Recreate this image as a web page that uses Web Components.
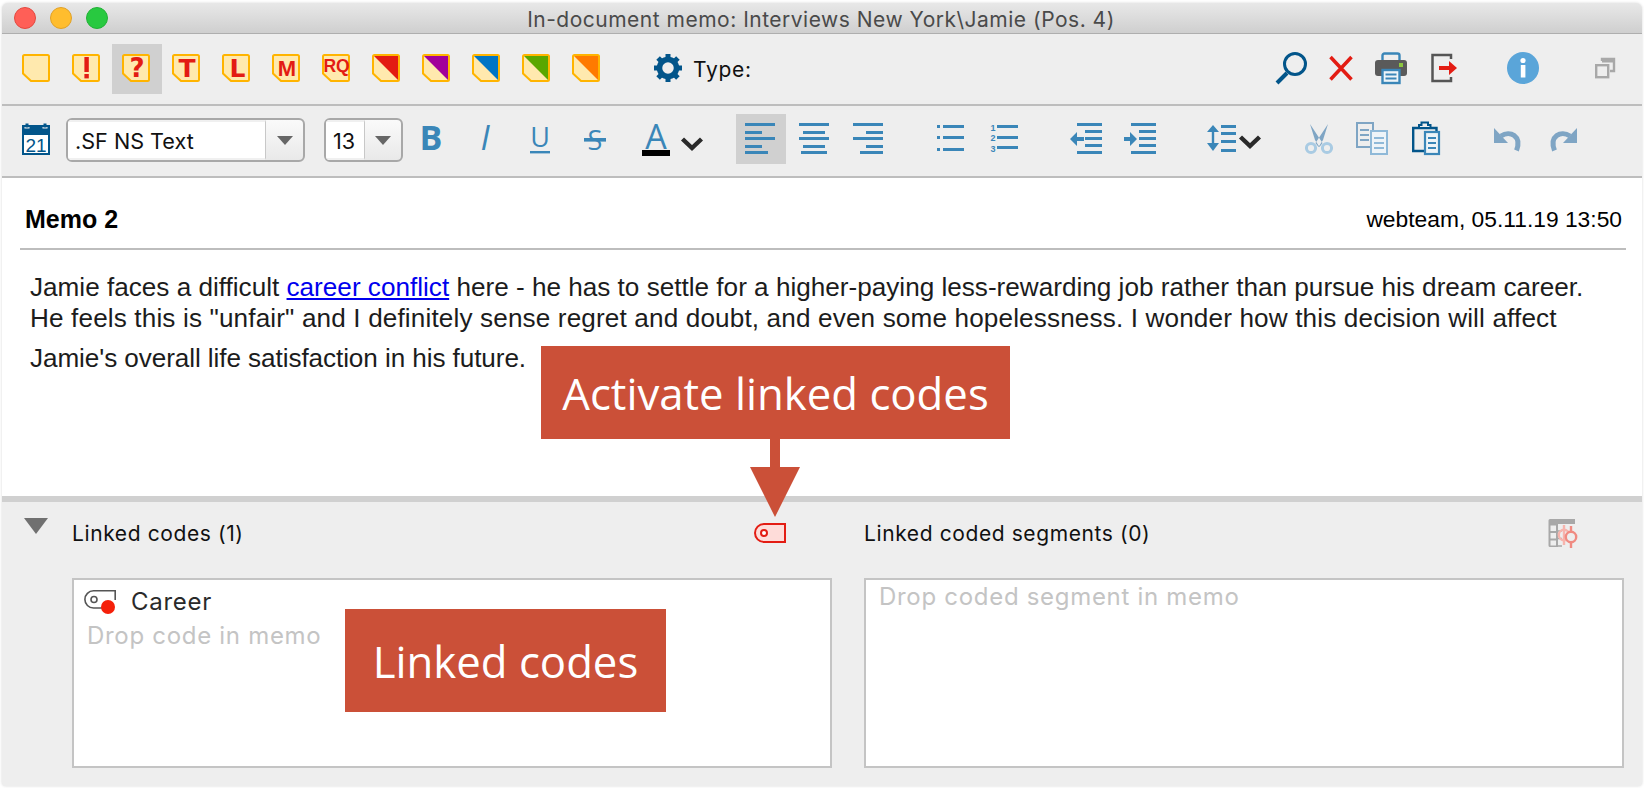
<!DOCTYPE html>
<html lang="en"><head><meta charset="utf-8"><title>In-document memo</title>
<style>
html,body{margin:0;padding:0;background:#fff;height:788px;overflow:hidden}
body{font-family:"Inter","Liberation Sans",sans-serif;}
</style></head><body>
<memo-window>
  <title-bar>In-document memo: Interviews New York\Jamie (Pos. 4)</title-bar>
  <tool-bar>
    <tool-icon name="m0" w="50" dy="2"></tool-icon><tool-icon name="m!" w="50" dy="2"></tool-icon><tool-icon name="m?" w="50" dy="2" active></tool-icon><tool-icon name="mT" w="50" dy="2"></tool-icon><tool-icon name="mL" w="50" dy="2"></tool-icon><tool-icon name="mM" w="50" dy="2"></tool-icon><tool-icon name="mRQ" w="50" dy="2"></tool-icon><tool-icon name="tr1" w="50" dy="2"></tool-icon><tool-icon name="tr2" w="50" dy="2"></tool-icon><tool-icon name="tr3" w="50" dy="2"></tool-icon><tool-icon name="tr4" w="50" dy="2"></tool-icon><tool-icon name="tr5" w="50" dy="2"></tool-icon>
    <tool-icon name="gear" w="28" ml="42"></tool-icon>
    <tool-label>Type:</tool-label>
    <tool-icon name="search" w="32" ml="auto"></tool-icon>
    <tool-icon name="close" w="24" ml="22"></tool-icon>
    <tool-icon name="print" w="32" ml="22"></tool-icon>
    <tool-icon name="exit" w="26" ml="24"></tool-icon>
    <tool-icon name="info" w="32" ml="50"></tool-icon>
    <tool-icon name="win" w="20" ml="56" mr="27"></tool-icon>
  </tool-bar>
  <tool-bar>
    <tool-icon name="cal" w="28" ml="10"></tool-icon>
    <combo-box w="239" field="198" ml="16">.SF NS Text</combo-box>
    <combo-box w="79" field="39" ml="19">13</combo-box>
    <tool-icon name="bold" w="24" ml="17"></tool-icon>
    <tool-icon name="ital" w="14" ml="34"></tool-icon>
    <tool-icon name="under" w="24" ml="36"></tool-icon>
    <tool-icon name="strike" w="24" ml="31"></tool-icon>
    <tool-icon name="color" w="28" ml="35"></tool-icon>
    <tool-icon name="chev1" w="22" ml="11"></tool-icon>
    <tool-icon name="alL" w="50" ml="33" dy="-2" active></tool-icon>
    <tool-icon name="alC" w="30" ml="13"></tool-icon>
    <tool-icon name="alR" w="30" ml="24"></tool-icon>
    <tool-icon name="bul" w="28" ml="54"></tool-icon>
    <tool-icon name="num" w="30" ml="25"></tool-icon>
    <tool-icon name="dec" w="32" ml="50"></tool-icon>
    <tool-icon name="inc" w="32" ml="22"></tool-icon>
    <tool-icon name="spc" w="30" ml="51"></tool-icon>
    <tool-icon name="chev2" w="22" ml="2"></tool-icon>
    <tool-icon name="cut" w="28" ml="44"></tool-icon>
    <tool-icon name="copy" w="32" ml="23"></tool-icon>
    <tool-icon name="paste" w="28" ml="24"></tool-icon>
    <tool-icon name="undo" w="28" ml="54"></tool-icon>
    <tool-icon name="redo" w="28" ml="27"></tool-icon>
  </tool-bar>
  <memo-body>
    <span slot="title">Memo 2</span>
    <span slot="meta">webteam, 05.11.19 13:50</span>
    <div class="l1">Jamie faces a difficult <a href="#" style="color:#0000ee;text-decoration:underline">career conflict</a> here - he has to settle for a higher-paying less-rewarding job rather than pursue his dream career.</div>
    <div class="l2">He feels this is "unfair" and I definitely sense regret and doubt, and even some hopelessness. I wonder how this decision will affect</div>
    <div class="l3">Jamie's overall life satisfaction in his future.</div>
  </memo-body>
  <linked-panel></linked-panel>
  <call-out style="left:539px;top:343px;width:469px;height:93px;font-size:43.7px">Activate linked codes</call-out>
  <arrow-down style="left:748px;top:436px"></arrow-down>
  <call-out style="left:343px;top:606px;width:321px;height:103px;font-size:43.7px">Linked codes</call-out>
</memo-window>
<script>
const B='#3a86b8',D='#02558a',M='#7fa5c4',R='#e31c13';
const memo=(inner='')=>`<g transform="translate(10 3)"><path d="M2.5 1H25.5A1.5 1.5 0 0 1 27 2.5V25.5A1.5 1.5 0 0 1 25.5 27H9L1 19.5V2.5A1.5 1.5 0 0 1 2.5 1Z" fill="#ffe9ae" stroke="#ffb400" stroke-width="2"/>${inner}</g>`;
const L=(t,x=14,y=21,s=20,f='Liberation Sans')=>`<text x="${x}" y="${y}" text-anchor="middle" font-family="${f}" font-weight="700" font-size="${s}" fill="${R}">${t}</text>`;
const tri=c=>memo(`<polygon points="2,2 26,2 26,26" fill="${c}"/>`);
const bars=(rows,c=B)=>rows.map(r=>`<rect x="${r[0]}" y="${r[1]}" width="${r[2]}" height="${r[3]||3}" fill="${c}"/>`).join('');
const T=(t,x,y,s,a='')=>`<text x="${x}" y="${y}" text-anchor="middle" font-family="Open Sans" font-size="${s}" fill="${B}" ${a}>${t}</text>`;
const chev=y=>`<polyline points="1.5,${y+2} 11,${y+11} 20.5,${y+2}" fill="none" stroke="#2a2a2a" stroke-width="4.4"/>`;
const gearTeeth=[0,45,90,135,180,225,270,315].map(a=>`<rect x="11.5" y="4" width="5" height="6" fill="${D}" transform="rotate(${a} 14 18)"/>`).join('');
const ICONS={
 m0:memo(),'m!':memo(`<rect x="12.4" y="3" width="4.4" height="15" fill="${R}"/><rect x="12.4" y="20" width="4.4" height="4.4" fill="${R}"/>`),
 'm?':memo(L('?',15,23,26,'DejaVu Sans')),mT:memo(L('T',15,23,25,'DejaVu Sans')),mL:memo(L('L',15.5,23,25,'DejaVu Sans')),
 mM:memo(L('M',15,22,22,'Liberation Sans')),mRQ:memo(L('RQ',14.5,18,17.5,'Liberation Sans')),
 tr1:tri('#e31c13'),tr2:tri('#a2009a'),tr3:tri('#0075c5'),tr4:tri('#5aa700'),tr5:tri('#ff7a00'),
 gear:`${gearTeeth}<circle cx="14" cy="18" r="8.5" fill="none" stroke="${D}" stroke-width="5.5"/>`,
 search:`<circle cx="20" cy="14" r="10.5" fill="none" stroke="${D}" stroke-width="3"/><line x1="12" y1="23" x2="2" y2="33" stroke="${D}" stroke-width="4"/>`,
 close:`<path d="M1.5 7 22.5 29.5M22.5 7 1.5 29.5" stroke="${R}" stroke-width="3.5" fill="none"/>`,
 print:`<rect x="7.5" y="3.5" width="17" height="10" rx="2" fill="#eee" stroke="${B}" stroke-width="2.4"/><rect x="0" y="10" width="32" height="16" rx="3" fill="#5a5a5a"/><rect x="24" y="13" width="4" height="4" fill="#8cc63f"/><rect x="7.5" y="20" width="17" height="13" fill="#eef4f8" stroke="${B}" stroke-width="2.4"/><path d="M10.5 24.5H21.5M10.5 28.5H21.5" stroke="${B}" stroke-width="2"/>`,
 exit:`<path d="M20 9V5H1.5V31H20V27" fill="none" stroke="#555" stroke-width="2.5"/><polygon points="8,16 18,16 18,11 26,18 18,25 18,20 8,20" fill="${R}"/>`,
 info:`<circle cx="16" cy="18" r="16" fill="#5aa5d9"/><circle cx="16" cy="10.5" r="2.6" fill="#fff"/><rect x="13.8" y="15" width="4.6" height="12.5" fill="#fff"/>`,
 win:`<path d="M7 11V9H19V21H15" fill="none" stroke="#a8a8a8" stroke-width="2.4"/><rect x="7" y="9" width="12" height="3.5" fill="#a8a8a8"/><rect x="1.2" y="15.2" width="12" height="12" fill="none" stroke="#a8a8a8" stroke-width="2.4"/>`,
 cal:`<rect x="0" y="3" width="28" height="30" fill="#fff"/><rect x="0" y="3" width="28" height="10" fill="${D}"/><rect x="3" y="1" width="4" height="5" fill="${D}" stroke="#eee"/><rect x="21" y="1" width="4" height="5" fill="${D}" stroke="#eee"/><rect x="1" y="4" width="26" height="28" fill="none" stroke="${D}" stroke-width="2"/><text x="14" y="30" text-anchor="middle" font-family="Liberation Sans" font-size="19" fill="${D}">21</text>`,
 bold:T('B',11,28,34,'font-weight="700" '),
 ital:`<text x="7" y="28" text-anchor="middle" font-family="Open Sans" font-style="italic" font-size="34" fill="${B}">I</text>`,
 under:T('U',12,25,27)+`<rect x="2" y="29" width="20" height="2.4" fill="${B}"/>`,
 strike:T('S',12,28,27)+`<rect x="1" y="16" width="22" height="3.6" fill="${B}"/>`,
 color:T('A',14,27,34)+`<rect x="0" y="28" width="28" height="6" fill="#000"/>`,
 chev1:chev(15),chev2:chev(13),
 alL:bars([[9,2,30],[9,10,17],[9,16,30],[9,24,17],[9,30,23]]),
 alC:bars([[0,1,30],[4,9,22],[0,15,30],[4,23,22],[2,29,26]]),
 alR:bars([[0,1,30],[13,9,17],[0,15,30],[13,23,17],[7,29,23]]),
 bul:bars([[0,3,3],[6,3,21],[0,14,3],[6,14,21],[0,26,3],[6,26,21]]),
 num:`<text x="3" y="9" text-anchor="middle" font-family="Liberation Sans" font-weight="700" font-size="9" fill="${B}">1</text><text x="3" y="19" text-anchor="middle" font-family="Liberation Sans" font-weight="700" font-size="9" fill="${B}">2</text><text x="3" y="30" text-anchor="middle" font-family="Liberation Sans" font-weight="700" font-size="9" fill="${B}">3</text>`+bars([[7,3,21],[7,14,21],[7,24,21]]),
 dec:bars([[7,1,25],[15,8,17],[15,15,17],[15,22,17],[7,29,25]])+`<polygon points="0,17 7,10 7,15 14,15 14,19 7,19 7,24" fill="${B}"/>`,
 inc:bars([[7,1,25],[15,8,17],[15,15,17],[15,22,17],[7,29,25]])+`<polygon points="13,17 6,10 6,15 0,15 0,19 6,19 6,24" fill="${B}"/>`,
 spc:`<path d="M6 3 12 10H7.2V21H12L6 29 0 21H4.8V10H0Z" fill="${B}"/>`+bars([[14,3,15],[14,10,15],[14,18,15],[14,27,15]]),
 cut:`<path d="M5 2 17.5 21 14.5 25 10 18ZM23 2 10.5 21 13.5 25 18 18Z" fill="${M}"/><circle cx="6" cy="26" r="4.6" fill="none" stroke="#a9cbe3" stroke-width="3"/><circle cx="22" cy="26" r="4.6" fill="none" stroke="#a9cbe3" stroke-width="3"/>`,
 copy:`<path d="M14 25H1V1H17V8" fill="none" stroke="${M}" stroke-width="2"/>`+bars([[4,7,9,2],[4,12,9,2],[4,17,9,2]],M)+`<rect x="15" y="9" width="16" height="23" fill="#eef4f8" stroke="#8fb9d8" stroke-width="2"/>`+bars([[18,15,10,2],[18,20,10,2],[18,25,10,2]],'#8fb9d8'),
 paste:`<path d="M12 29H1.2V6H24.5V10" fill="none" stroke="${D}" stroke-width="2.4"/><path d="M7 6V3H9.5V0.5H16V3H18.5V6Z" fill="#eee" stroke="${D}" stroke-width="2"/><rect x="13" y="10" width="14" height="22" fill="#eef4f8" stroke="${B}" stroke-width="2.2"/>`+bars([[16,15,8,2],[16,20,8,2],[16,25,8,2]]),
 undo:`<path d="M7 14C16 8 28 14 22.5 28.5" fill="none" stroke="${M}" stroke-width="5"/><polygon points="0,6 0,21 14,21" fill="${M}"/>`,
 redo:`<path d="M21 14C12 8 0 14 5.5 28.5" fill="none" stroke="${M}" stroke-width="5"/><polygon points="28,6 28,21 14,21" fill="${M}"/>`
};
class MemoWindow extends HTMLElement{constructor(){super();this.attachShadow({mode:'open'}).innerHTML=`<style>:host{display:flex;flex-direction:column;position:relative;box-sizing:border-box;margin:3px 2px 0 2px;width:1640px;height:783px;background:#eee;border-radius:6px 6px 4px 4px;overflow:hidden;box-shadow:0 0 3px rgba(0,0,0,.16)}</style><slot></slot>`}}
class TitleBar extends HTMLElement{constructor(){super();this.attachShadow({mode:'open'}).innerHTML=`<style>:host{display:flex;flex:none;align-items:center;justify-content:center;box-sizing:border-box;height:31px;padding:2px 2px 0 0;background:linear-gradient(#e8e8e8,#cfcfcf);border-bottom:1px solid #aeaeae;color:#4a4a4a;font:21px "Inter","Liberation Sans",sans-serif;letter-spacing:.5px;position:relative}
.l{position:absolute;left:12px;top:4px;display:flex;gap:14px}i{display:block;width:22px;height:22px;border-radius:50%;box-sizing:border-box}</style><div class="l"><i style="background:#ff5f57;border:1px solid #e3483f"></i><i style="background:#ffbd2e;border:1px solid #e0a128"></i><i style="background:#28c940;border:1px solid #22b136"></i></div><slot></slot>`}}
class ToolBar extends HTMLElement{constructor(){super();this.attachShadow({mode:'open'}).innerHTML=`<style>:host{display:flex;flex:none;align-items:center;box-sizing:border-box;height:72px;padding:0 0 2px 10px;border-bottom:2px solid #bdbdbd;background:#eee}</style><slot></slot>`}}
class ToolIcon extends HTMLElement{connectedCallback(){if(this.shadowRoot)return;const w=this.getAttribute('w'),ml=this.getAttribute('ml'),mr=this.getAttribute('mr'),dy=this.getAttribute('dy'),a=this.hasAttribute('active');const s=this.attachShadow({mode:'open'});const big=+w===50;s.innerHTML=`<style>:host{display:flex;align-items:center;flex:none;width:${w}px;height:${big?50:36}px;margin-top:${dy||0}px;margin-left:${ml==='auto'?'auto':(ml||0)+'px'};margin-right:${mr||0}px;${a?'background:#d0d0d0':''}}svg{display:block;overflow:visible}</style><svg width="${w}" height="36" viewBox="0 0 ${w} 36" aria-hidden="true">${ICONS[this.getAttribute('name')]}</svg>`}}
class ToolLabel extends HTMLElement{constructor(){super();this.attachShadow({mode:'open'}).innerHTML=`<style>:host{display:block;flex:none;margin:3px 0 0 11px;color:#111;font:21px "Inter","Liberation Sans",sans-serif;letter-spacing:.7px}</style><slot></slot>`}}
class ComboBox extends HTMLElement{connectedCallback(){if(this.shadowRoot)return;const w=this.getAttribute('w'),f=this.getAttribute('field'),ml=this.getAttribute('ml');this.attachShadow({mode:'open'}).innerHTML=`<style>:host{display:flex;flex:none;box-sizing:border-box;width:${w}px;height:44px;margin-left:${ml}px;border:2px solid #a8a8a8;border-radius:6px;overflow:hidden;background:linear-gradient(#fafafa,#e9e9e9);color:#111;font:21.6px "Inter","Liberation Sans",sans-serif}
.f{box-sizing:border-box;width:${f}px;height:100%;background:#fff;padding:1px 0 0 7px;display:flex;align-items:center;border:solid #f0f0f0;border-width:2px 0;white-space:nowrap;overflow:hidden;border-right:1px solid #c8c8c8}.a{flex:1;display:flex;align-items:center;justify-content:center}.a i{display:block;width:0;height:0;border:8px solid transparent;border-top:9px solid #666;border-bottom:0}</style><div class="f"><slot></slot></div><div class="a"><i></i></div>`}}
class MemoBody extends HTMLElement{constructor(){super();this.attachShadow({mode:'open'}).innerHTML=`<style>:host{display:block;flex:none;box-sizing:border-box;height:318px;background:#fff;padding:0 16px 0 18px;font-family:"Liberation Sans",sans-serif;color:#1c1c1c;border-bottom:0}
.h{display:flex;justify-content:space-between;align-items:center;box-sizing:border-box;height:72px;padding:12px 4px 0 5px;border-bottom:2px solid #bdbdbd;color:#000}
.h ::slotted([slot=title]){font-weight:700;font-size:25px}.h ::slotted([slot=meta]){font-size:22.8px}
.t{padding:22px 0 0 10px;font-size:26.14px;white-space:nowrap}
::slotted(.l1){line-height:31px}::slotted(.l2){line-height:31px;letter-spacing:.14px}::slotted(.l3){line-height:31px;margin-top:9px;letter-spacing:-.085px}</style><div class="h"><slot name="title"></slot><slot name="meta"></slot></div><div class="t"><slot></slot></div>`}}
class LinkedPanel extends HTMLElement{constructor(){super();this.attachShadow({mode:'open'}).innerHTML=`<style>:host{display:grid;flex:1;grid-template-columns:70px 760px 792px;grid-template-rows:76px 190px;column-gap:0;border-top:6px solid #d0d0d0;background:#eee;color:#111;font:21px "Inter","Liberation Sans",sans-serif;letter-spacing:.6px;box-sizing:border-box}
.tw{padding:16px 0 0 22px}.tw i{display:block;width:0;height:0;border:12px solid transparent;border-top:16px solid #707070;border-bottom:0}
.hd{display:flex;align-items:center;justify-content:space-between;height:60px;padding-right:46px;margin-top:1px}
.b3{margin-left:32px}
.box{box-sizing:border-box;border:2px solid #c4c4c4;background:#fff;padding:6px 10px;font-size:24px;letter-spacing:.7px;height:190px}
.ph{color:#c4c4c4;padding-left:3px}.row{display:flex;align-items:center;gap:15px;color:#2a2a2a;height:30px}
svg{display:block;flex:none}</style>
<div class="tw"><i></i></div>
<div class="hd"><span>Linked codes (1)</span><svg width="32" height="20" viewBox="0 0 32 20"><path d="M10 1H31V19H10A9 9 0 0 1 10 1Z" fill="#fedcd9" stroke="#e31c13" stroke-width="2"/><circle cx="10" cy="10" r="3" fill="#fff" stroke="#e31c13" stroke-width="2"/></svg></div>
<div class="hd b3"><span>Linked coded segments (0)</span><svg width="30" height="30" viewBox="0 0 30 30"><path d="M2 1H27V6H10V29H2A1.5 1.5 0 0 1 .5 27.5V2.5A1.5 1.5 0 0 1 2 1Z" fill="#a8a8a8"/><rect x="2.5" y="7.5" width="5.5" height="5.5" fill="#eee"/><rect x="2.5" y="15" width="5.5" height="5.5" fill="#eee"/><rect x="2.5" y="22.5" width="5.5" height="5" fill="#eee"/><path d="M10 13H14M10 20.5H14M10 28H14" stroke="#a8a8a8" stroke-width="1.6"/><path d="M16 7V27" stroke="#f7b4ad" stroke-width="2.4"/><circle cx="16" cy="17" r="5.2" fill="none" stroke="#f7b4ad" stroke-width="2.4"/><path d="M23 8V30" stroke="#f08b82" stroke-width="2.4"/><circle cx="23" cy="19" r="5.2" fill="#eee" stroke="#f08b82" stroke-width="2.4"/></svg></div>
<div></div>
<div class="box"><div class="row"><svg width="32" height="26" viewBox="0 0 32 26"><path d="M32 2.8H9.5A8.6 8.6 0 0 0 9.5 20H20M31.2 2.8V12" fill="none" stroke="#555" stroke-width="1.6"/><circle cx="10" cy="11.5" r="3" fill="none" stroke="#555" stroke-width="1.6"/><circle cx="24" cy="19" r="7" fill="#f5200a"/></svg><span>Career</span></div><div class="ph" style="margin-top:5px">Drop code in memo</div></div>
<div class="box b3" style="padding-top:2px"><div class="ph">Drop coded segment in memo</div></div>`}}
class CallOut extends HTMLElement{constructor(){super();this.attachShadow({mode:'open'}).innerHTML=`<style>:host{position:absolute;display:flex;align-items:center;justify-content:center;background:#cb5038;color:#fff;font-family:"Open Sans",sans-serif;box-sizing:border-box}</style><slot></slot>`}}
class ArrowDown extends HTMLElement{constructor(){super();this.attachShadow({mode:'open'}).innerHTML=`<style>:host{position:absolute;display:block;width:50px;height:78px}svg{display:block}</style><svg width="50" height="78" viewBox="0 0 50 78"><polygon points="20,0 30,0 30,28 50,28 25,78 0,28 20,28" fill="#cb5038"/></svg>`}}
[['memo-window',MemoWindow],['title-bar',TitleBar],['tool-bar',ToolBar],['tool-icon',ToolIcon],['tool-label',ToolLabel],['combo-box',ComboBox],['memo-body',MemoBody],['linked-panel',LinkedPanel],['call-out',CallOut],['arrow-down',ArrowDown]].forEach(([n,c])=>customElements.define(n,c));
</script>
</body></html>
